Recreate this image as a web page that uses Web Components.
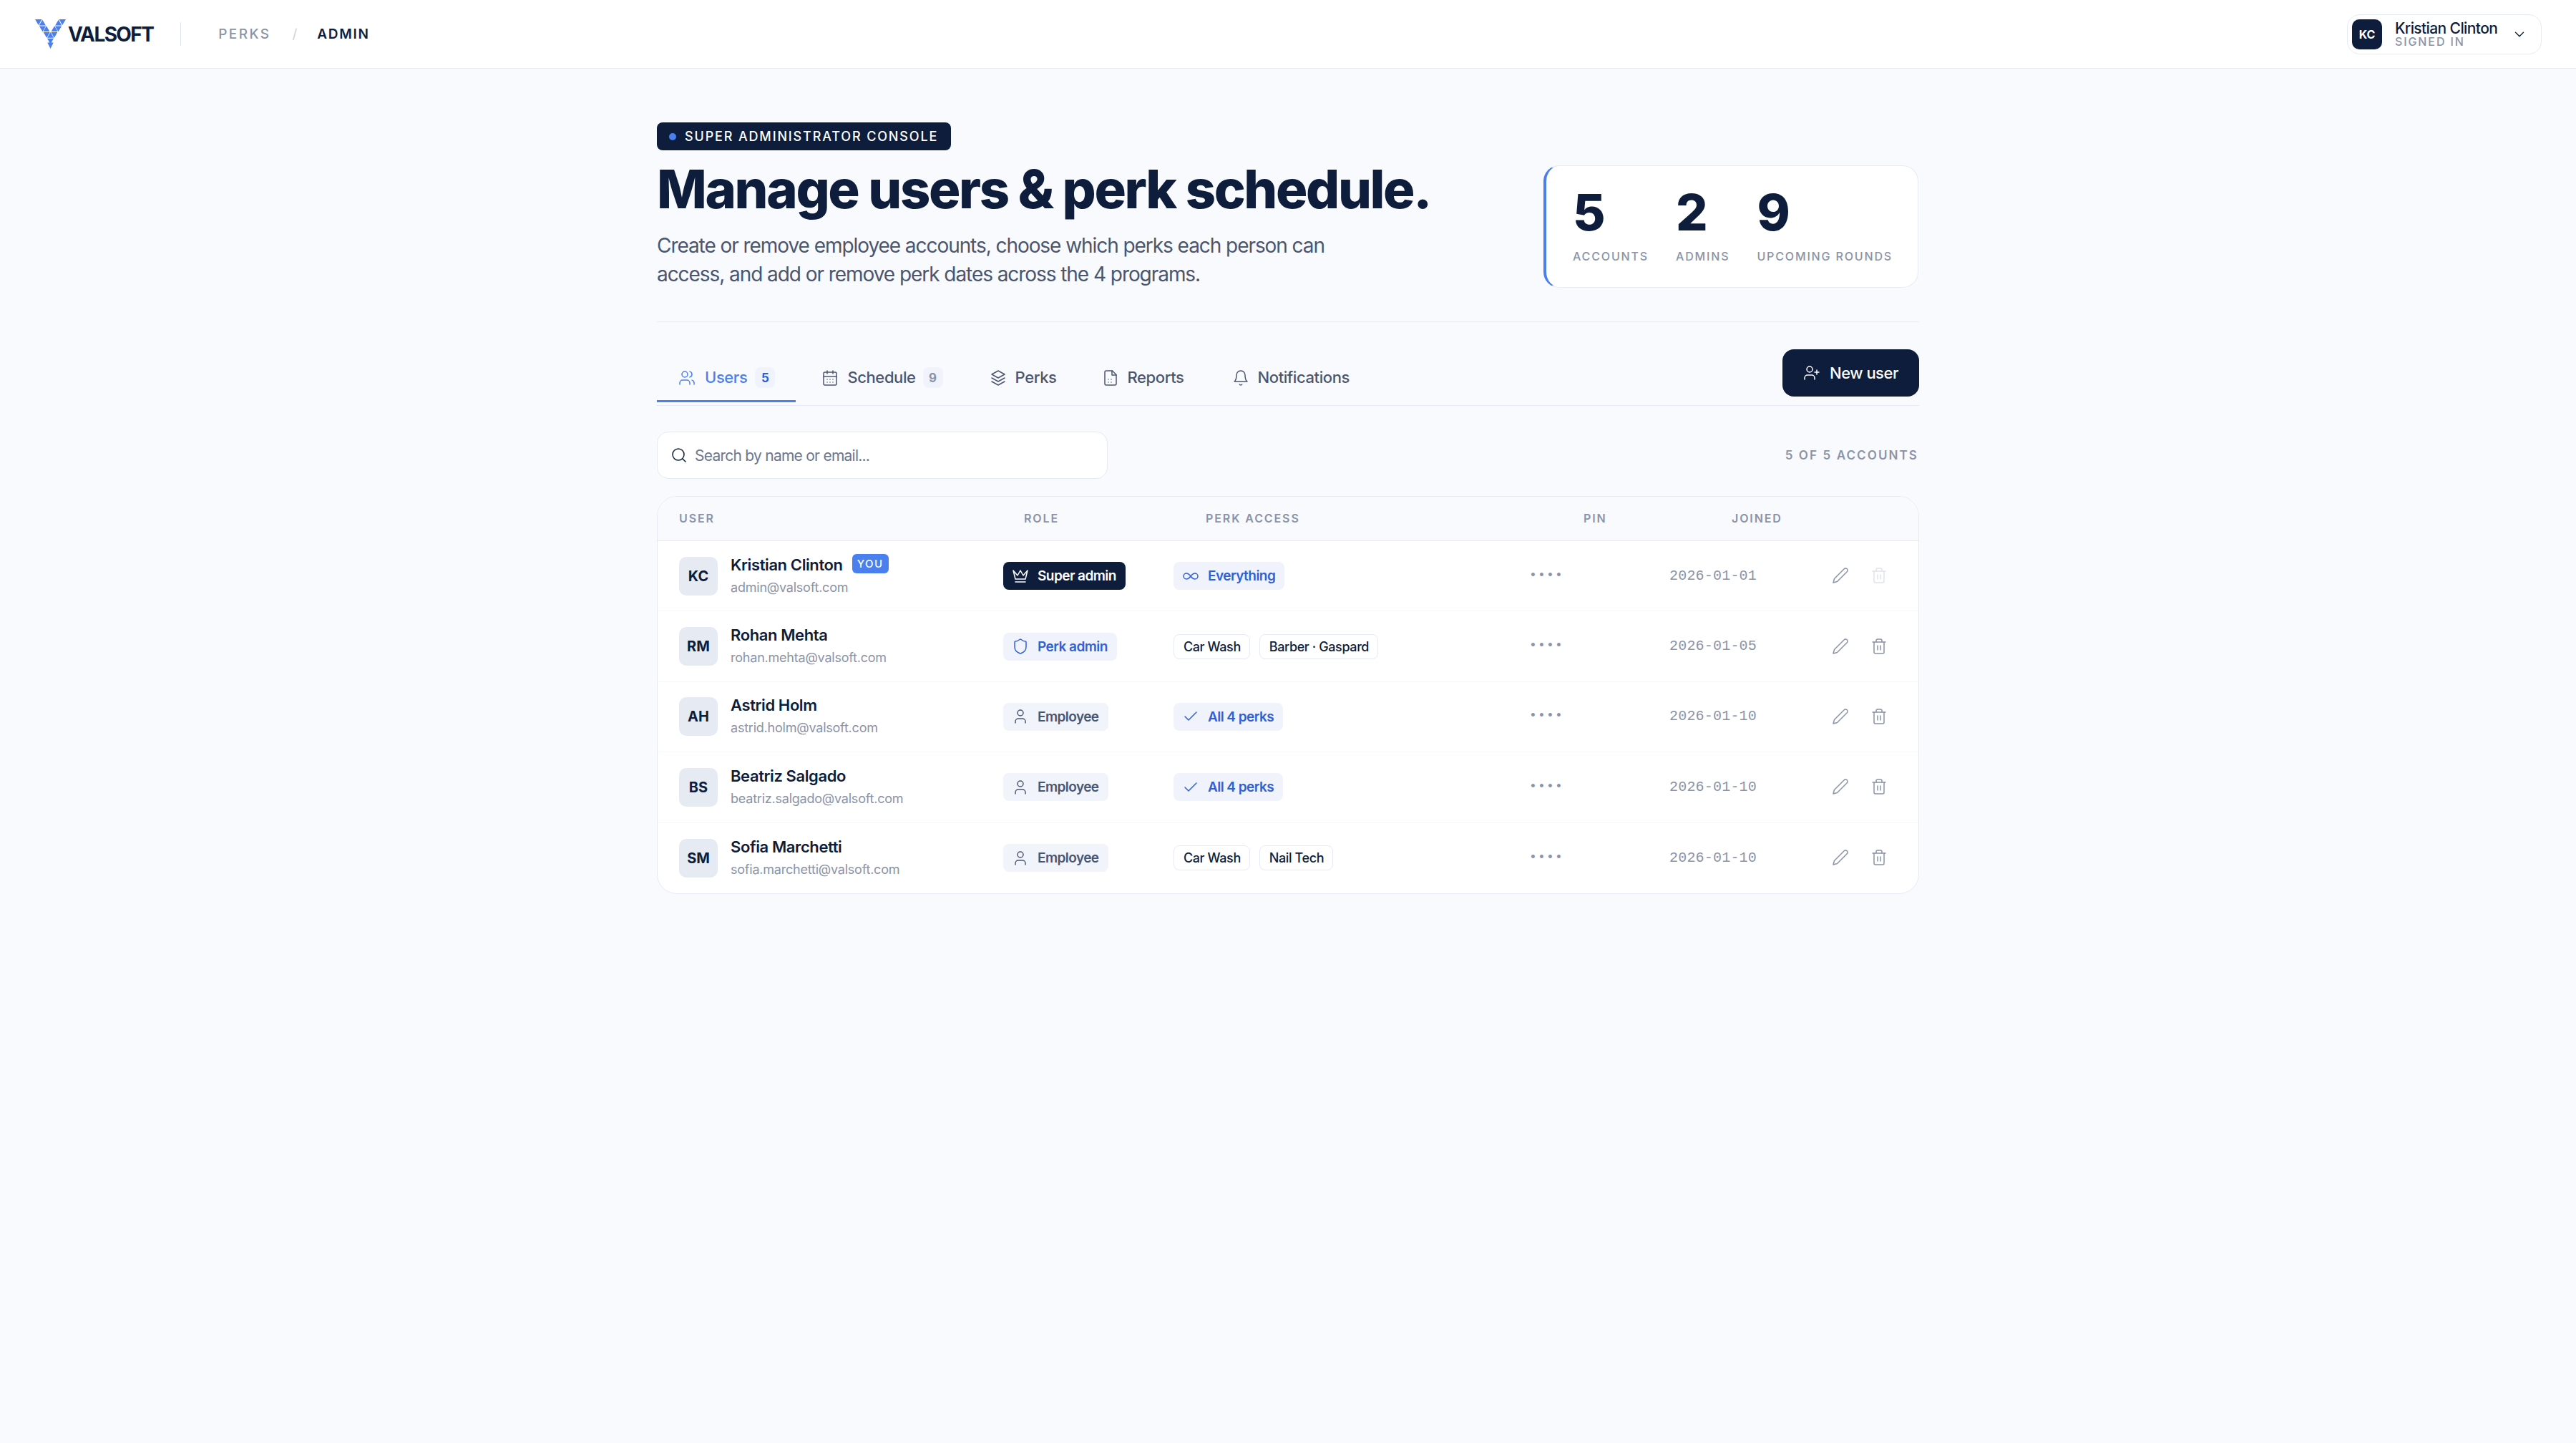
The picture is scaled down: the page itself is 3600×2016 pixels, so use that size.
<!doctype html>
<html lang="en">
<head>
<meta charset="utf-8">
<title>Valsoft Perks Admin</title>
<style>
html, body { margin: 0; background: #f9fafd; }
body { font-family: Inter, "Noto Sans", sans-serif; color: #0d1d3b; min-height: 2016px; }
</style>
</head>
<body>
<app-header></app-header>
<admin-page>
  <hero-section></hero-section>
  <tab-bar></tab-bar>
  <search-row></search-row>
  <user-table>
    <user-row initials="KC" name="Kristian Clinton" email="admin@valsoft.com" pin="••••" joined="2026-01-01" you>
      <ui-pill slot="role" kind="navy" icon="crown">Super admin</ui-pill>
      <ui-pill slot="access" kind="blue" icon="infinity">Everything</ui-pill>
    </user-row>
    <user-row initials="RM" name="Rohan Mehta" email="rohan.mehta@valsoft.com" pin="••••" joined="2026-01-05">
      <ui-pill slot="role" kind="blue" icon="shield">Perk admin</ui-pill>
      <ui-pill slot="access" kind="tag">Car Wash</ui-pill>
      <ui-pill slot="access" kind="tag">Barber · Gaspard</ui-pill>
    </user-row>
    <user-row initials="AH" name="Astrid Holm" email="astrid.holm@valsoft.com" pin="••••" joined="2026-01-10">
      <ui-pill slot="role" kind="grey" icon="user">Employee</ui-pill>
      <ui-pill slot="access" kind="blue" icon="check">All 4 perks</ui-pill>
    </user-row>
    <user-row initials="BS" name="Beatriz Salgado" email="beatriz.salgado@valsoft.com" pin="••••" joined="2026-01-10">
      <ui-pill slot="role" kind="grey" icon="user">Employee</ui-pill>
      <ui-pill slot="access" kind="blue" icon="check">All 4 perks</ui-pill>
    </user-row>
    <user-row initials="SM" name="Sofia Marchetti" email="sofia.marchetti@valsoft.com" pin="••••" joined="2026-01-10">
      <ui-pill slot="role" kind="grey" icon="user">Employee</ui-pill>
      <ui-pill slot="access" kind="tag">Car Wash</ui-pill>
      <ui-pill slot="access" kind="tag">Nail Tech</ui-pill>
    </user-row>
  </user-table>
</admin-page>

<script>
const icons = {
  users: '<path d="M16 21v-2a4 4 0 0 0-4-4H6a4 4 0 0 0-4 4v2"/><circle cx="9" cy="7" r="4"/><path d="M22 21v-2a4 4 0 0 0-3-3.87"/><path d="M16 3.13a4 4 0 0 1 0 7.75"/>',
  calendar: '<rect x="3" y="4" width="18" height="18" rx="2"/><path d="M16 2v4M8 2v4M3 10h18M8 14h.01M12 14h.01M16 14h.01M8 18h.01M12 18h.01M16 18h.01"/>',
  layers: '<path d="M12 2 3 7l9 5 9-5-9-5z"/><path d="M3 12l9 5 9-5"/><path d="M3 17l9 5 9-5"/>',
  file: '<path d="M14.5 2H6a2 2 0 0 0-2 2v16a2 2 0 0 0 2 2h12a2 2 0 0 0 2-2V7.5L14.5 2z"/><path d="M14 2v6h6"/><path d="M9 14h.01M13 14h.01M9 18h.01M13 18h.01"/>',
  bell: '<path d="M6 8a6 6 0 0 1 12 0c0 7 3 9 3 9H3s3-2 3-9"/><path d="M10.3 21a1.94 1.94 0 0 0 3.4 0"/>',
  search: '<circle cx="11" cy="11" r="8"/><path d="m21 21-4.3-4.3"/>',
  userPlus: '<path d="M16 21v-2a4 4 0 0 0-4-4H6a4 4 0 0 0-4 4v2"/><circle cx="9" cy="7" r="4"/><path d="M19 8v6M22 11h-6"/>',
  crown: '<path d="m2 4 3 12h14l3-12-6 7-4-7-4 7-6-7z"/><path d="M5 20h14"/>',
  shield: '<path d="M20 13c0 5-3.5 7.5-7.66 8.95a1 1 0 0 1-.67-.01C7.5 20.5 4 18 4 13V6a1 1 0 0 1 1-1c2 0 4.5-1.2 6.24-2.72a1.17 1.17 0 0 1 1.52 0C14.51 3.81 17 5 19 5a1 1 0 0 1 1 1z"/>',
  infinity: '<path d="M12 12c-2-2.67-4-4-6-4a4 4 0 1 0 0 8c2 0 4-1.33 6-4Zm0 0c2 2.67 4 4 6 4a4 4 0 0 0 0-8c-2 0-4 1.33-6 4Z"/>',
  check: '<path d="M20 6 9 17l-5-5"/>',
  user: '<path d="M19 21v-2a4 4 0 0 0-4-4H9a4 4 0 0 0-4 4v2"/><circle cx="12" cy="7" r="4"/>',
  pencil: '<path d="M17 3a2.85 2.83 0 1 1 4 4L7.5 20.5 2 22l1.5-5.5Z"/>',
  trash: '<path d="M3 6h18"/><path d="M19 6v14c0 1-1 2-2 2H7c-1 0-2-1-2-2V6"/><path d="M8 6V4c0-1 1-2 2-2h4c1 0 2 1 2 2v2"/><path d="M10 11v6M14 11v6"/>',
  chevron: '<path d="m6 9 6 6 6-6"/>'
};

function icon(name, size, width = 1.5) {
  return `<svg width="${size}" height="${size}" viewBox="0 0 24 24" fill="none" stroke="currentColor" stroke-width="${width}" stroke-linecap="round" stroke-linejoin="round" style="display:block;flex:none">${icons[name]}</svg>`;
}

class AppHeader extends HTMLElement {
  constructor() {
    super();
    this.attachShadow({mode: 'open'});
    this.shadowRoot.innerHTML = `
<style>
:host { display: flex; align-items: center; justify-content: space-between; height: 95px; background: #fff; border-bottom: 1px solid #e6eaf5; padding: 0 48px 0 49px; }
.left { display: flex; align-items: center; }
.logo { display: flex; align-items: flex-end; gap: 3px; }
.word { font-size: 28px; line-height: 30px; font-weight: 700; letter-spacing: -1.6px; color: #0d1d3b; margin-bottom: 5px; }
.sep { width: 1px; height: 33px; background: #e1e5ef; margin: 0 52px 0 38px; }
.crumb { font-size: 19px; font-weight: 500; letter-spacing: 2.4px; color: #8a93a8; }
.slash { font-size: 19px; color: #cdd3e0; margin: 0 28px 0 30px; }
.now { font-size: 19px; font-weight: 600; letter-spacing: 1.7px; color: #0d1d3b; }
.pill { box-sizing: border-box; width: 272px; height: 56px; display: flex; align-items: center; border: 1px solid #e6eaf5; border-radius: 18px; padding: 0 19px 0 6px; background: #fff; }
.avatar { width: 42px; height: 42px; border-radius: 10px; background: #0d1d3b; color: #fff; font-size: 16px; font-weight: 700; display: grid; place-items: center; }
.who { margin-left: 18px; flex: 1; display: flex; flex-direction: column; }
.name { font-size: 21px; line-height: 21px; font-weight: 500; letter-spacing: -.6px; color: #0d1d3b; }
.sub { font-size: 16px; line-height: 16px; font-weight: 500; letter-spacing: 1.9px; color: #8a93a8; }
</style>
<div class="left">
  <div class="logo">
    <svg width="43" height="41" viewBox="49 27 43 41" fill="#4a7ff0" style="display:block">
      <path d="M49 27h9.500l-4.700 8zM59.300 27.800l4.600 7.800h-9.200zM54.900 36.400h9.200l-4.600 7.800zM64.900 36.200l4.500 7.800h-9zM60.700 45h9l-4.500 7.800zM70.500 45l4.500 7.800h-9zM66 53.800h9l-4.500 7.800zM66.300 59.500h8.400l-4.200 8.500z"/>
      <path d="M92 27h-9.500l4.700 8zM81.700 27.800l-4.600 7.800h9.200zM86.100 36.400h-9.200l4.600 7.800zM76.100 36.200l-4.500 7.800h9zM80.300 45h-9l4.500 7.800z"/>
    </svg>
    <span class="word">VALSOFT</span>
  </div>
  <span class="sep"></span>
  <span class="crumb">PERKS</span>
  <span class="slash">/</span>
  <span class="now">ADMIN</span>
</div>
<div class="pill">
  <div class="avatar">KC</div>
  <div class="who"><span class="name">Kristian Clinton</span><span class="sub">SIGNED IN</span></div>
  ${icon('chevron', 22)}
</div>`;
  }
}

class AdminPage extends HTMLElement {
  constructor() {
    super();
    this.attachShadow({mode: 'open'});
    this.shadowRoot.innerHTML = `
<style>
:host { display: block; width: 1764px; margin: 0 auto; padding-top: 75px; }
</style>
<slot></slot>`;
  }
}

class HeroSection extends HTMLElement {
  constructor() {
    super();
    this.attachShadow({mode: 'open'});
    this.shadowRoot.innerHTML = `
<style>
:host { display: flex; justify-content: space-between; align-items: flex-start; box-sizing: border-box; height: 279px; border-bottom: 1px solid #e9ecf5; }
.badge { display: inline-flex; align-items: center; gap: 12px; height: 39px; box-sizing: border-box; padding: 0 18px 0 17px; background: #0d1d3b; border-radius: 8px; color: #fff; font-size: 18px; font-weight: 500; letter-spacing: 1.85px; }
.dot { width: 10px; height: 10px; border-radius: 50%; background: #4a7ff0; }
h1 { margin: 10px 0 0; font-size: 74px; line-height: 88px; font-weight: 800; letter-spacing: -2.37px; color: #0d1d3b; }
p { margin: 15px 0 0; width: 960px; font-size: 28px; line-height: 40px; letter-spacing: -1.06px; color: #4a5670; }
.stats { box-sizing: border-box; width: 524px; height: 171px; margin-top: 60px; margin-right: 1px; background: #fff; border: 1px solid #e6eaf5; border-left: 4px solid #4a7ff0; border-radius: 22px; display: flex; padding: 30px 0 0 37px; gap: 38px; }
.stat b { display: block; font-size: 70px; line-height: 70px; font-weight: 800; color: #0d1d3b; }
.stat span { display: block; margin-top: 15px; font-size: 16px; line-height: 22px; font-weight: 500; letter-spacing: 1.85px; color: #8a93a8; white-space: nowrap; }
</style>
<div>
  <div class="badge"><span class="dot"></span>SUPER ADMINISTRATOR CONSOLE</div>
  <h1>Manage users &amp; perk schedule.</h1>
  <p>Create or remove employee accounts, choose which perks each person can access, and add or remove perk dates across the 4 programs.</p>
</div>
<div class="stats">
  <div class="stat"><b>5</b><span>ACCOUNTS</span></div>
  <div class="stat"><b>2</b><span>ADMINS</span></div>
  <div class="stat"><b>9</b><span>UPCOMING ROUNDS</span></div>
</div>`;
  }
}

class TabBar extends HTMLElement {
  constructor() {
    super();
    this.attachShadow({mode: 'open'});
    const tabs = [
      ['users', 'Users', '5', 6, true],
      ['calendar', 'Schedule', '9', 5],
      ['layers', 'Perks', '', 3],
      ['file', 'Reports', '', 7],
      ['bell', 'Notifications', '', 0]
    ];
    this.shadowRoot.innerHTML = `
<style>
:host { display: flex; justify-content: space-between; align-items: flex-start; box-sizing: border-box; height: 117px; border-bottom: 1px solid #e6eaf5; padding-top: 38px; }
nav { display: flex; gap: 0; height: 74px; }
.tab { box-sizing: border-box; display: flex; align-items: flex-start; gap: 12px; height: 74px; padding: 25px 30px 0 30px; font-size: 22px; line-height: 28px; font-weight: 500; letter-spacing: -.4px; color: #4a5670; }
.tab svg { margin-top: 3px; }
.tab.on { color: #4a7ff0; border-bottom: 3px solid #4a7ff0; padding-right: 29px; gap: 13px; }
.count { width: 28px; height: 29px; margin-top: 0; border-radius: 8px; background: #f0f3fc; display: grid; place-items: center; font-size: 17px; font-weight: 700; letter-spacing: 0; color: #8a93a8; margin-left: -2px; }
.on .count { color: #2f5fd9; }
button { box-sizing: border-box; width: 191px; height: 66px; display: flex; align-items: center; justify-content: center; gap: 13px; border: 0; border-radius: 16px; background: #0d1d3b; color: #fff; font: 500 22px Inter, sans-serif; letter-spacing: -.5px; }
</style>
<nav>${tabs.map(t => `
  <div class="tab${t[4] ? ' on' : ''}" style="margin-right:${t[3]}px">${icon(t[0], 24)}<span>${t[1]}</span>${t[2] ? `<span class="count">${t[2]}</span>` : ''}</div>`).join('')}
</nav>
<button>${icon('userPlus', 24)}<span>New user</span></button>`;
  }
}

class SearchRow extends HTMLElement {
  constructor() {
    super();
    this.attachShadow({mode: 'open'});
    this.shadowRoot.innerHTML = `
<style>
:host { display: flex; justify-content: space-between; align-items: center; margin-top: 36px; }
.box { box-sizing: border-box; width: 630px; height: 66px; display: flex; align-items: center; gap: 10px; padding-left: 18px; background: #fff; border: 1px solid #e6eaf5; border-radius: 16px; font-size: 21px; letter-spacing: -.75px; color: #6b7690; }
.box svg { color: #0d1d3b; }
.count { font-size: 17px; font-weight: 600; letter-spacing: 2.1px; color: #8a93a8; margin-right: 1px; }
</style>
<div class="box">${icon('search', 24)}<span>Search by name or email...</span></div>
<span class="count">5 OF 5 ACCOUNTS</span>`;
  }
}

class UserTable extends HTMLElement {
  constructor() {
    super();
    this.attachShadow({mode: 'open'});
    this.shadowRoot.innerHTML = `
<style>
:host { display: block; box-sizing: border-box; margin-top: 24px; background: #fff; border: 1px solid #e6eaf5; border-radius: 28px; overflow: hidden; }
.head { box-sizing: border-box; height: 62px; padding: 0 0 2px 30px; display: grid; grid-template-columns: 482px 254px 528px 207px 1fr; align-items: center; background: #f9fafd; border-bottom: 1px solid #e6eaf5; font-size: 16px; font-weight: 600; letter-spacing: 1.9px; color: #8a93a8; }
</style>
<div class="head"><span>USER</span><span>ROLE</span><span>PERK ACCESS</span><span>PIN</span><span>JOINED</span></div>
<slot></slot>`;
  }
}

class UserRow extends HTMLElement {
  constructor() {
    super();
    this.attachShadow({mode: 'open'});
  }

  connectedCallback() {
    const you = this.hasAttribute('you');
    this.shadowRoot.innerHTML = `
<style>
:host { display: grid; box-sizing: border-box; height: 98.4px; padding-left: 30px; grid-template-columns: 453px 238px 499px 194px 227px 1fr; align-items: center; border-bottom: 1px solid #f5f6fa; }
:host(:last-child) { border-bottom: 0; }
.user { display: flex; align-items: center; gap: 18px; }
.avatar { width: 54px; height: 54px; border-radius: 10px; background: #e6eaf3; display: grid; place-items: center; font-size: 20px; font-weight: 700; color: #0d1d3b; }
.text { margin-bottom: 3px; }
.line { display: flex; align-items: center; gap: 13px; height: 30px; }
.name { font-size: 22px; font-weight: 600; letter-spacing: -.4px; color: #0d1d3b; }
.you { height: 27px; margin-top: -2px; padding: 0 7px; box-sizing: border-box; display: grid; place-items: center; border-radius: 6px; background: #4a7ff0; color: #fff; font-size: 15px; font-weight: 500; letter-spacing: 1.5px; }
.email { font-size: 18px; line-height: 24px; margin-top: 5px; letter-spacing: -.22px; color: #8a93a8; }
.access { display: flex; gap: 13px; }
.mono { font-family: "Liberation Mono", monospace; font-size: 20px; letter-spacing: .2px; color: #8a93a8; margin-top: -1px; }
.pin { font-family: "Liberation Mono", monospace; font-size: 18px; letter-spacing: 1.2px; color: #8a93a8; margin: -2px 0 0 -2px; }
.actions { display: flex; gap: 30px; color: #8a93a8; margin-top: -1px; }
.off { color: #dfe3ec; }
</style>
<div class="user">
  <div class="avatar">${this.getAttribute('initials')}</div>
  <div class="text">
    <div class="line"><span class="name">${this.getAttribute('name')}</span>${you ? '<span class="you">YOU</span>' : ''}</div>
    <div class="email">${this.getAttribute('email')}</div>
  </div>
</div>
<div><slot name="role"></slot></div>
<div class="access"><slot name="access"></slot></div>
<div class="pin">${this.getAttribute('pin')}</div>
<div class="mono">${this.getAttribute('joined')}</div>
<div class="actions">${icon('pencil', 24)}<span class="${you ? 'off' : ''}">${icon('trash', 24)}</span></div>`;
  }
}

class UiPill extends HTMLElement {
  constructor() {
    super();
    this.attachShadow({mode: 'open'});
  }

  connectedCallback() {
    const name = this.getAttribute('icon');
    this.shadowRoot.innerHTML = `
<style>
:host { display: inline-flex; align-items: center; gap: 12px; box-sizing: border-box; height: 39px; padding: 0 13px 0 12px; border-radius: 8px; font-size: 19px; font-weight: 600; letter-spacing: -.55px; white-space: nowrap; vertical-align: top; }
:host([kind="navy"]) { background: #0d1d3b; color: #fff; }
:host([kind="blue"]) { background: #f0f3fc; color: #2f5fd9; }
:host([kind="grey"]) { background: #f1f4fa; color: #4a5670; }
:host([kind="tag"]) { height: 35px; margin: 2px 0; padding: 0 12px 0 13px; background: #fff; color: #0d1d3b; border: 1px solid #e6eaf5; font-size: 18px; font-weight: 500; letter-spacing: -.4px; }
</style>
${name ? icon(name, 24) : ''}<slot></slot>`;
  }
}

customElements.define('app-header', AppHeader);
customElements.define('admin-page', AdminPage);
customElements.define('hero-section', HeroSection);
customElements.define('tab-bar', TabBar);
customElements.define('search-row', SearchRow);
customElements.define('user-table', UserTable);
customElements.define('user-row', UserRow);
customElements.define('ui-pill', UiPill);
</script>
</body>
</html>
